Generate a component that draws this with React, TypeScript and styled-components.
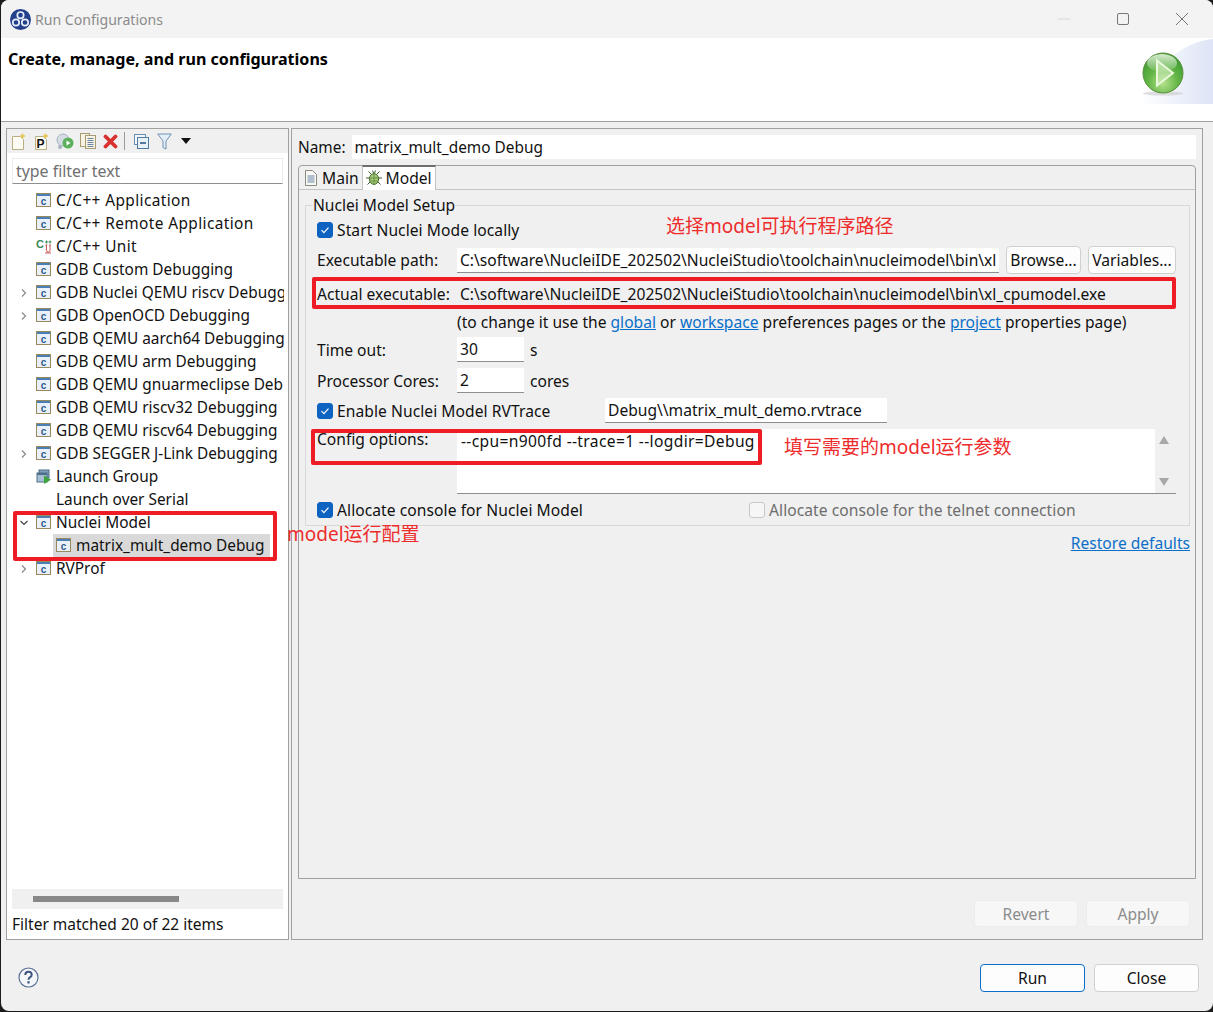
import React from 'react';
import styled, { createGlobalStyle } from 'styled-components';

const GlobalStyle = createGlobalStyle`
  html, body {
    margin: 0;
    padding: 0;
    background: #1c1c1c;
  }
  * {
    box-sizing: border-box;
  }
`;

const FONT = `"Noto Sans", "Noto Sans CJK SC", sans-serif`;

const Frame = styled.div`
  position: relative;
  width: 1213px;
  height: 1012px;
  padding: 0 0 1px 1px;
  font-family: ${FONT};
  font-size: 15.6px;
  color: #111;
  overflow: hidden;
`;

const Dialog = styled.div`
  width: 100%;
  height: 100%;
  display: flex;
  flex-direction: column;
  background: #f0f0f0;
  border-radius: 8px;
  overflow: hidden;
`;

const TitleBar = styled.div`
  height: 38px;
  flex: none;
  display: flex;
  align-items: center;
  padding: 0 2px 0 9px;
  background: #f3f3f3;
  color: #8b8b8b;
  font-size: 14.1px;
`;

const TitleText = styled.span`
  margin-left: 4px;
  flex: 1;
`;

const WinButton = styled.div`
  width: 59px;
  display: flex;
  justify-content: center;
`;

const Banner = styled.div`
  height: 84px;
  flex: none;
  display: flex;
  justify-content: space-between;
  background: #fff;
  border-bottom: 1px solid #a0a0a0;
`;

const BannerTitle = styled.div`
  padding: 10px 0 0 7px;
  font-size: 16.1px;
  font-weight: 700;
  color: #000;
`;

const Panes = styled.div`
  height: 812px;
  flex: none;
  margin-top: 6px;
  padding: 0 10px 0 5px;
  display: flex;
  gap: 2px;
`;

const LeftPane = styled.div`
  width: 283px;
  flex: none;
  display: flex;
  flex-direction: column;
  background: #fff;
  border: 1px solid #a0a0a0;
`;

const Toolbar = styled.div`
  height: 24px;
  flex: none;
  display: flex;
  align-items: center;
  background: #f0f0f0;
`;

const ToolSlot = styled.div<{ $w?: number }>`
  width: ${p => p.$w ?? 23}px;
  display: flex;
  justify-content: center;
  align-items: center;
`;

const ToolSep = styled.div`
  width: 1px;
  height: 18px;
  margin: 0 5px 0 2px;
  background: #9a9a9a;
`;

const FilterInput = styled.div`
  margin: 5px 5px 0 5px;
  height: 26px;
  flex: none;
  display: flex;
  align-items: center;
  padding: 1px 0 0 3px;
  border: 1px solid #ededed;
  border-bottom-color: #8e8e8e;
  color: #707070;
  font-size: 15.9px;
  line-height: 1;
`;

const Tree = styled.div`
  flex: 1;
  padding: 5px 4px 0 0;
  overflow: hidden;
  font-size: 15.4px;
`;

const TreeRow = styled.div<{ $depth?: number }>`
  height: 23px;
  display: flex;
  align-items: center;
  padding-left: ${p => (p.$depth ? 46 : 9)}px;
  white-space: nowrap;
  overflow: hidden;
`;

const Twisty = styled.div`
  width: 20px;
  flex: none;
  padding-right: 5px;
  display: flex;
  justify-content: center;
`;

const IconSlot = styled.div`
  width: 16px;
  height: 16px;
  flex: none;
  display: flex;
  align-items: center;
  justify-content: center;
`;

const TreeLabel = styled.span<{ $spread?: boolean }>`
  margin-left: 4px;
  letter-spacing: ${p => (p.$spread ? '0.4px' : 'normal')};
`;

const SelectedBox = styled.div`
  display: flex;
  align-items: center;
  height: 23px;
  width: 217px;
  padding-left: 3px;
  background: #d9d9d9;
`;

const HScroll = styled.div`
  height: 20px;
  flex: none;
  margin: 0 5px;
  padding: 7px 0 0 21px;
  background: #f0f0f0;
`;

const HThumb = styled.div`
  width: 146px;
  height: 6px;
  background: #888;
`;

const StatusLine = styled.div`
  height: 30px;
  flex: none;
  padding-left: 5px;
  display: flex;
  align-items: center;
  font-size: 15.5px;
`;

const RightPane = styled.div`
  flex: 1;
  display: flex;
  flex-direction: column;
  padding: 0 6px 0 6px;
  border: 1px solid #a0a0a0;
`;

const NameRow = styled.div`
  height: 36px;
  flex: none;
  display: flex;
  align-items: center;
  font-size: 15.4px;
`;

const NameInput = styled.div`
  width: 844px;
  height: 24px;
  margin-left: 6px;
  padding-left: 3px;
  display: flex;
  align-items: center;
  background: #fff;
`;

const TabFolder = styled.div`
  height: 714px;
  flex: none;
  display: flex;
  flex-direction: column;
  border: 1px solid #a0a0a0;
  border-radius: 4px 4px 0 0;
`;

const TabStrip = styled.div`
  height: 24px;
  flex: none;
  display: flex;
  align-items: flex-end;
  border-bottom: 1px solid #c4c4c4;
`;

const Tab = styled.div<{ $active?: boolean }>`
  height: ${p => (p.$active ? 25 : 24)}px;
  margin-bottom: -1px;
  display: flex;
  align-items: center;
  gap: 4px;
  padding: 0 3px 1px ${p => (p.$active ? 3 : 5)}px;
  background: ${p => (p.$active ? '#fff' : 'transparent')};
  border: 1px solid #c4c4c4;
  border-width: ${p => (p.$active ? '2px 1px 0 1px' : '0')};
  border-top-color: #6e6e6e;
`;

const TabBody = styled.div`
  flex: 1;
  padding: 8px 5px 0 6px;
  display: flex;
  flex-direction: column;
`;

const Group = styled.fieldset`
  height: 328px;
  margin: 0;
  padding: 0;
  border: 1px solid #d9d9d9;
  display: flex;
  flex-direction: column;
`;

const Legend = styled.legend`
  margin-left: 7px;
  padding: 0;
  line-height: 14px;
  height: 14px;
`;

const GroupRows = styled.div`
  display: flex;
  flex-direction: column;
  padding: 0 13px 0 11px;
`;

const Row = styled.div<{ $h: number; $mt?: number }>`
  height: ${p => p.$h}px;
  margin-top: ${p => p.$mt ?? 0}px;
  flex: none;
  display: flex;
  align-items: center;
  white-space: nowrap;
`;

const FieldLabel = styled.div`
  width: 140px;
  flex: none;
`;

const Field = styled.div<{ $w: number }>`
  width: ${p => p.$w}px;
  height: 25px;
  flex: none;
  padding-left: 3px;
  display: flex;
  align-items: center;
  overflow: hidden;
  white-space: nowrap;
  background: #fff;
  border-bottom: 1px solid #8e8e8e;
`;

const PushButton = styled.div<{ $w: number; $ml: number }>`
  width: ${p => p.$w}px;
  height: 28px;
  margin-left: ${p => p.$ml}px;
  flex: none;
  display: flex;
  align-items: center;
  justify-content: center;
  background: #fdfdfd;
  border: 1px solid #d0d0d0;
  border-radius: 4px;
`;

const ReadOnlyValue = styled.div`
  padding-left: 3px;
`;

const Hint = styled.div`
  padding-left: 140px;
  margin-top: -1px;
`;

const Link = styled.span`
  color: #0a6fc9;
  text-decoration: underline;
`;

const Suffix = styled.span`
  margin-left: 6px;
`;

const CheckBox = styled.div<{ $on?: boolean }>`
  width: 16px;
  height: 16px;
  flex: none;
  margin-right: 4px;
  display: flex;
  align-items: center;
  justify-content: center;
  border-radius: 3px;
  background: ${p => (p.$on ? '#0e62c0' : '#f6f6f6')};
  border: 1px solid ${p => (p.$on ? '#0e62c0' : '#c8c8c8')};
`;

const CheckLabel = styled.div<{ $w?: number; $muted?: boolean }>`
  display: flex;
  align-items: center;
  width: ${p => (p.$w ? `${p.$w}px` : 'auto')};
  color: ${p => (p.$muted ? '#6d6d6d' : 'inherit')};
  flex: none;
  letter-spacing: 0.07px;
`;

const ConfigRow = styled.div`
  height: 65px;
  margin-top: 6px;
  flex: none;
  display: flex;
`;

const ConfigLabel = styled.div`
  width: 140px;
  flex: none;
  line-height: 20px;
`;

const ConfigArea = styled.div`
  width: 719px;
  flex: none;
  display: flex;
  background: #fff;
  border-bottom: 1px solid #8e8e8e;
`;

const ConfigText = styled.div`
  flex: 1;
  padding: 1px 0 0 4px;
  line-height: 22px;
  letter-spacing: 0.35px;
`;

const VScroll = styled.div`
  width: 21px;
  flex: none;
  display: flex;
  flex-direction: column;
  justify-content: space-between;
  align-items: center;
  padding: 7px 4px 7px 0;
  background: #f0f0f0;
`;

const RestoreRow = styled.div`
  display: flex;
  justify-content: flex-end;
  padding-top: 6px;
`;

const ActionRow = styled.div`
  flex: 1;
  display: flex;
  justify-content: flex-end;
  align-items: flex-start;
  gap: 8px;
  padding: 21px 6px 0 0;
`;

const DialogButton = styled.div<{ $tone?: 'off' | 'primary' }>`
  width: ${p => (p.$tone === 'off' ? 104 : 105)}px;
  height: ${p => (p.$tone === 'off' ? 27 : 28)}px;
  display: flex;
  align-items: center;
  justify-content: center;
  border-radius: 4px;
  background: ${p => (p.$tone === 'off' ? '#f7f7f7' : '#fdfdfd')};
  color: ${p => (p.$tone === 'off' ? '#8c8c8c' : '#111')};
  border: 1px solid ${p =>
    p.$tone === 'off' ? '#ececec' : p.$tone === 'primary' ? '#0a6fc9' : '#d0d0d0'};
`;

const Footer = styled.div`
  flex: 1;
  display: flex;
  align-items: center;
  justify-content: space-between;
  padding: 5px 14px 0 17px;
`;

const HelpSlot = styled.div`
  display: flex;
  margin-top: -2px;
`;

const FooterButtons = styled.div`
  display: flex;
  gap: 9px;
`;

// red marks drawn over the screenshot
const Mark = styled.div<{ $x: number; $y: number; $w: number; $h: number }>`
  position: absolute;
  left: ${p => p.$x}px;
  top: ${p => p.$y}px;
  width: ${p => p.$w}px;
  height: ${p => p.$h}px;
  border: 4px solid #ee1c25;
  border-radius: 2px;
  pointer-events: none;
`;

const Note = styled.div<{ $x: number; $y: number }>`
  position: absolute;
  left: ${p => p.$x}px;
  top: ${p => p.$y}px;
  color: #ee2c2c;
  font-size: 19px;
  line-height: 26px;
  white-space: nowrap;
`;

const ClassIcon = () => (
  <svg width="16" height="15" viewBox="0 0 16 15">
    <rect x="0.5" y="0.5" width="14" height="13" fill="#e9f0fa" stroke="#998a5e" />
    <rect x="1" y="1" width="13" height="2" fill="#4a7fb5" />
    <text x="7.5" y="11.5" fontSize="10" fontWeight="700" fontFamily="Liberation Sans" textAnchor="middle" fill="#2a5a8a">c</text>
  </svg>
);

const UnitIcon = () => (
  <svg width="16" height="15" viewBox="0 0 16 15">
    <text x="0" y="9" fontSize="11" fontWeight="700" fontFamily="Liberation Sans" fill="#3b8a5a">C</text>
    <path d="M9 3h3M10.5 1.5v3M12.5 3h3M14 1.5v3" stroke="#3b8a5a" strokeWidth="1" />
    <path d="M9.5 6h1.8M13 6h1.8M10.4 6v5.5q0 1.5 1.8 1.5t1.8-1.5V6M9 14h6" stroke="#c0504d" strokeWidth="1" fill="none" />
  </svg>
);

const GroupIcon = () => (
  <svg width="16" height="15" viewBox="0 0 16 15">
    <rect x="3" y="1" width="10" height="8" fill="#7d9db8" stroke="#4e6f8c" />
    <rect x="1" y="4" width="10" height="9" fill="#a9c0d4" stroke="#4e6f8c" />
    <rect x="1" y="4" width="10" height="2" fill="#4e6f8c" />
    <path d="M8 6.5l7 4.2-7 4.2z" fill="#3fa33f" />
  </svg>
);

const Chevron = ({ open }: { open?: boolean }) => (
  <svg width="10" height="10" viewBox="0 0 10 10">
    <path d={open ? 'M1.5 3l3.5 3.5L8.5 3' : 'M3 1.5L6.5 5 3 8.5'} fill="none" stroke={open ? '#444' : '#8a8a8a'} strokeWidth="1.2" />
  </svg>
);

const Tick = () => (
  <svg width="12" height="12" viewBox="0 0 12 12">
    <path d="M2.5 6.2l2.4 2.4 4.6-5" fill="none" stroke="#fff" strokeWidth="1.2" />
  </svg>
);

const AppLogo = () => (
  <svg width="21" height="21" viewBox="0 0 21 21">
    <circle cx="10.5" cy="10.5" r="10.5" fill="#22408c" />
    <circle cx="10.5" cy="6.2" r="3.2" fill="none" stroke="#e8eefa" strokeWidth="1.7" />
    <circle cx="6" cy="13.5" r="3.2" fill="none" stroke="#e8eefa" strokeWidth="1.7" />
    <circle cx="15" cy="13.5" r="3.2" fill="none" stroke="#e8eefa" strokeWidth="1.7" />
  </svg>
);

const BannerArt = () => (
  <svg width="72" height="84" viewBox="0 0 72 84">
    <defs>
      <linearGradient id="sw" x1="0" y1="0" x2="1" y2="0">
        <stop offset="0" stopColor="#fff" />
        <stop offset="1" stopColor="#dde4f5" />
      </linearGradient>
      <radialGradient id="ball" cx="0.5" cy="0.75" r="0.7">
        <stop offset="0" stopColor="#b6e28e" />
        <stop offset="0.55" stopColor="#5fb443" />
        <stop offset="1" stopColor="#3f9a34" />
      </radialGradient>
      <linearGradient id="shine" x1="0" y1="0" x2="0" y2="1">
        <stop offset="0" stopColor="#eaf7e0" stopOpacity="0.9" />
        <stop offset="1" stopColor="#eaf7e0" stopOpacity="0.1" />
      </linearGradient>
    </defs>
    <path d="M0 66Q24 6 72 1V66Z" fill="url(#sw)" />
    <ellipse cx="22" cy="55.5" rx="20" ry="2" fill="#c9c9c9" opacity="0.6" />
    <circle cx="22" cy="35" r="20" fill="url(#ball)" stroke="#5a8f3c" />
    <ellipse cx="21" cy="25" rx="15" ry="9" fill="url(#shine)" />
    <path d="M16 22.5L32 35 16 47.5Z" fill="#d8f0c4" fillOpacity="0.55" stroke="#eaf8dc" strokeWidth="2" />
  </svg>
);

const NewIcon = () => (
  <svg width="16" height="17" viewBox="0 0 16 17">
    <path d="M1.5 3.5h8l3 3v10h-11z" fill="#fdfcf2" stroke="#b9ae86" />
    <path d="M11.5 0.5v5M9 3h5" stroke="#e5c34a" strokeWidth="1.4" />
  </svg>
);

const ProtoIcon = () => (
  <svg width="16" height="17" viewBox="0 0 16 17">
    <path d="M1.5 3.5h8l3 3v10h-11z" fill="#fdfcf2" stroke="#b9ae86" />
    <text x="2.5" y="15" fontSize="12" fontWeight="700" fontFamily="Liberation Sans" fill="#111">P</text>
    <path d="M11.5 0.5v5M9 3h5" stroke="#e5c34a" strokeWidth="1.4" />
  </svg>
);

const DupIcon = () => (
  <svg width="18" height="17" viewBox="0 0 18 17">
    <circle cx="7" cy="7" r="6" fill="#d5dce4" stroke="#a9b4c0" />
    <circle cx="4" cy="14" r="2" fill="#a9b4c0" />
    <circle cx="12" cy="10" r="5.5" fill="#5cb05c" />
    <path d="M10.5 7.5l4 2.5-4 2.5z" fill="#fff" />
  </svg>
);

const CopyDocIcon = () => (
  <svg width="16" height="16" viewBox="0 0 16 16">
    <rect x="0.5" y="0.5" width="9" height="13" fill="#f7f3e3" stroke="#a89c74" />
    <rect x="5.5" y="2.5" width="10" height="13" fill="#f7f3e3" stroke="#a89c74" />
    <path d="M7.5 5.5h6M7.5 7.5h6M7.5 9.5h6M7.5 11.5h6M7.5 13.5h6" stroke="#6a87a8" />
  </svg>
);

const DeleteIcon = () => (
  <svg width="15" height="15" viewBox="0 0 15 15">
    <path d="M2.5 2.5l10 10M12.5 2.5l-10 10" stroke="#d8322f" strokeWidth="3.8" strokeLinecap="round" />
  </svg>
);

const CollapseIcon = () => (
  <svg width="15" height="15" viewBox="0 0 15 15">
    <rect x="0.5" y="0.5" width="11" height="10" fill="#f3f7fb" stroke="#6a8db0" />
    <rect x="3.5" y="3.5" width="11" height="11" fill="#e8f0f8" stroke="#4f7aa3" />
    <path d="M6 9h6" stroke="#23527e" strokeWidth="1.4" />
  </svg>
);

const FunnelIcon = () => (
  <svg width="15" height="17" viewBox="0 0 15 17">
    <path d="M0.7 1h13.6L9 8v8L6 14.5V8z" fill="#e4eef6" stroke="#6f93b3" />
  </svg>
);

const DropArrow = () => (
  <svg width="10" height="6" viewBox="0 0 10 6">
    <path d="M0 0h10L5 6z" fill="#111" />
  </svg>
);

const DocIcon = () => (
  <svg width="14" height="16" viewBox="0 0 14 16">
    <path d="M1.5 0.5h7l4 4v11h-11z" fill="#f7f7f4" stroke="#8a8a80" />
    <path d="M3.5 6h7M3.5 8h7M3.5 10h7M3.5 12h7" stroke="#6a87a8" />
  </svg>
);

const BugIcon = () => (
  <svg width="16" height="16" viewBox="0 0 16 16">
    <path d="M2.5 1.5l3.5 3.5M13.5 1.5L10 5M0 8h3.5M12.5 8H16M1.5 14.5L5 11M14.5 14.5L11 11M6.5 0.5l1 2.5M9.5 0.5l-1 2.5" stroke="#3d5a2a" strokeWidth="1" />
    <ellipse cx="8" cy="9" rx="4.6" ry="5.4" fill="#a5c97a" stroke="#466b2a" />
    <path d="M8 4v10M4 8h8M4.5 11h7" stroke="#5d8c33" strokeWidth="0.8" />
  </svg>
);

const HelpIcon = () => (
  <svg width="21" height="21" viewBox="0 0 21 21">
    <circle cx="10.5" cy="10.5" r="9.5" fill="#f4f6fa" stroke="#5b7196" strokeWidth="1.2" />
    <path d="M7.3 8q0-3.2 3.2-3.2t3.2 2.9q0 1.6-1.6 2.5t-1.6 2.6" fill="none" stroke="#3f5580" strokeWidth="2" />
    <rect x="9.4" y="14.2" width="2.2" height="2.3" fill="#3f5580" />
  </svg>
);

const WinIcon = ({ kind }: { kind: 'min' | 'max' | 'close' }) => (
  <svg width="14" height="14" viewBox="0 0 14 14">
    {kind === 'min' && <path d="M1 7h12" stroke="#d8d8d8" />}
    {kind === 'max' && <rect x="1.5" y="1.5" width="11" height="11" rx="1.5" fill="none" stroke="#777" />}
    {kind === 'close' && <path d="M1 1l12 12M13 1L1 13" stroke="#777" />}
  </svg>
);

const ScrollArrow = ({ down }: { down?: boolean }) => (
  <svg width="12" height="8" viewBox="0 0 12 8">
    <path d={down ? 'M1 0h10L6 8z' : 'M1 8h10L6 0z'} fill="#a8a8a8" />
  </svg>
);

type TreeItem = {
  label: string;
  twisty?: 'closed' | 'open';
  icon?: 'class' | 'unit' | 'group' | 'none';
  spread?: boolean;
};

const items: TreeItem[] = [
  { label: 'C/C++ Application', spread: true },
  { label: 'C/C++ Remote Application', spread: true },
  { label: 'C/C++ Unit', icon: 'unit', spread: true },
  { label: 'GDB Custom Debugging' },
  { label: 'GDB Nuclei QEMU riscv Debugg', twisty: 'closed' },
  { label: 'GDB OpenOCD Debugging', twisty: 'closed' },
  { label: 'GDB QEMU aarch64 Debugging' },
  { label: 'GDB QEMU arm Debugging' },
  { label: 'GDB QEMU gnuarmeclipse Deb' },
  { label: 'GDB QEMU riscv32 Debugging' },
  { label: 'GDB QEMU riscv64 Debugging' },
  { label: 'GDB SEGGER J-Link Debugging', twisty: 'closed' },
  { label: 'Launch Group', icon: 'group' },
  { label: 'Launch over Serial', icon: 'none' },
  { label: 'Nuclei Model', twisty: 'open' },
];

const renderIcon = (icon: TreeItem['icon']) => {
  if (icon === 'unit') return <UnitIcon />;
  if (icon === 'group') return <GroupIcon />;
  if (icon === 'none') return null;
  return <ClassIcon />;
};

const NavRow: React.FC<{ item: TreeItem }> = ({ item }) => (
  <TreeRow>
    <Twisty>{item.twisty && <Chevron open={item.twisty === 'open'} />}</Twisty>
    <IconSlot>{renderIcon(item.icon)}</IconSlot>
    <TreeLabel $spread={item.spread}>{item.label}</TreeLabel>
  </TreeRow>
);

const App: React.FC = () => {
  return (
    <Frame>
      <GlobalStyle />
      <Dialog>
        <TitleBar>
          <AppLogo />
          <TitleText>Run Configurations</TitleText>
          <WinButton><WinIcon kind="min" /></WinButton>
          <WinButton><WinIcon kind="max" /></WinButton>
          <WinButton><WinIcon kind="close" /></WinButton>
        </TitleBar>
        <Banner>
          <BannerTitle>Create, manage, and run configurations</BannerTitle>
          <BannerArt />
        </Banner>
        <Panes>
          <LeftPane>
            <Toolbar>
              <ToolSlot><NewIcon /></ToolSlot>
              <ToolSlot><ProtoIcon /></ToolSlot>
              <ToolSlot><DupIcon /></ToolSlot>
              <ToolSlot><CopyDocIcon /></ToolSlot>
              <ToolSlot><DeleteIcon /></ToolSlot>
              <ToolSep />
              <ToolSlot><CollapseIcon /></ToolSlot>
              <ToolSlot><FunnelIcon /></ToolSlot>
              <ToolSlot $w={20}><DropArrow /></ToolSlot>
            </Toolbar>
            <FilterInput>type filter text</FilterInput>
            <Tree>
              {items.map(item => (
                <NavRow key={item.label} item={item} />
              ))}
              <TreeRow $depth={1}>
                <SelectedBox>
                  <IconSlot><ClassIcon /></IconSlot>
                  <TreeLabel>matrix_mult_demo Debug</TreeLabel>
                </SelectedBox>
              </TreeRow>
              <NavRow item={{ label: 'RVProf', twisty: 'closed' }} />
            </Tree>
            <HScroll><HThumb /></HScroll>
            <StatusLine>Filter matched 20 of 22 items</StatusLine>
          </LeftPane>
          <RightPane>
            <NameRow>
              Name:
              <NameInput>matrix_mult_demo Debug</NameInput>
            </NameRow>
            <TabFolder>
              <TabStrip>
                <Tab><DocIcon />Main</Tab>
                <Tab $active><BugIcon />Model</Tab>
              </TabStrip>
              <TabBody>
                <Group>
                  <Legend>Nuclei Model Setup</Legend>
                  <GroupRows>
                    <Row $h={26} $mt={5}>
                      <CheckLabel><CheckBox $on><Tick /></CheckBox>Start Nuclei Mode locally</CheckLabel>
                    </Row>
                    <Row $h={28} $mt={3}>
                      <FieldLabel>Executable path:</FieldLabel>
                      <Field $w={542}>C:\software\NucleiIDE_202502\NucleiStudio\toolchain\nucleimodel\bin\xl</Field>
                      <PushButton $w={75} $ml={7}>Browse...</PushButton>
                      <PushButton $w={88} $ml={7}>Variables...</PushButton>
                    </Row>
                    <Row $h={34} $mt={3}>
                      <FieldLabel>Actual executable:</FieldLabel>
                      <ReadOnlyValue>C:\software\NucleiIDE_202502\NucleiStudio\toolchain\nucleimodel\bin\xl_cpumodel.exe</ReadOnlyValue>
                    </Row>
                    <Row $h={23}>
                      <Hint>
                        (to change it use the <Link>global</Link> or <Link>workspace</Link> preferences pages or the <Link>project</Link> properties page)
                      </Hint>
                    </Row>
                    <Row $h={25} $mt={3}>
                      <FieldLabel>Time out:</FieldLabel>
                      <Field $w={67}>30</Field>
                      <Suffix>s</Suffix>
                    </Row>
                    <Row $h={25} $mt={6}>
                      <FieldLabel>Processor Cores:</FieldLabel>
                      <Field $w={67}>2</Field>
                      <Suffix>cores</Suffix>
                    </Row>
                    <Row $h={25} $mt={5}>
                      <CheckLabel $w={288}><CheckBox $on><Tick /></CheckBox>Enable Nuclei Model RVTrace</CheckLabel>
                      <Field $w={282}>Debug\\matrix_mult_demo.rvtrace</Field>
                    </Row>
                    <ConfigRow>
                      <ConfigLabel>Config options:</ConfigLabel>
                      <ConfigArea>
                        <ConfigText>--cpu=n900fd --trace=1 --logdir=Debug</ConfigText>
                        <VScroll>
                          <ScrollArrow />
                          <ScrollArrow down />
                        </VScroll>
                      </ConfigArea>
                    </ConfigRow>
                    <Row $h={26} $mt={3}>
                      <CheckLabel $w={432}><CheckBox $on><Tick /></CheckBox>Allocate console for Nuclei Model</CheckLabel>
                      <CheckLabel $muted><CheckBox />Allocate console for the telnet connection</CheckLabel>
                    </Row>
                  </GroupRows>
                </Group>
                <RestoreRow><Link>Restore defaults</Link></RestoreRow>
              </TabBody>
            </TabFolder>
            <ActionRow>
              <DialogButton $tone="off">Revert</DialogButton>
              <DialogButton $tone="off">Apply</DialogButton>
            </ActionRow>
          </RightPane>
        </Panes>
        <Footer>
          <HelpSlot><HelpIcon /></HelpSlot>
          <FooterButtons>
            <DialogButton $tone="primary">Run</DialogButton>
            <DialogButton>Close</DialogButton>
          </FooterButtons>
        </Footer>
      </Dialog>
      <Mark $x={13} $y={511} $w={264} $h={50} />
      <Mark $x={312} $y={277} $w={864} $h={32} />
      <Mark $x={311} $y={429} $w={451} $h={36} />
      <Note $x={666} $y={213}>选择model可执行程序路径</Note>
      <Note $x={784} $y={434}>填写需要的model运行参数</Note>
      <Note $x={287} $y={521}>model运行配置</Note>
    </Frame>
  );
};

export default App;
